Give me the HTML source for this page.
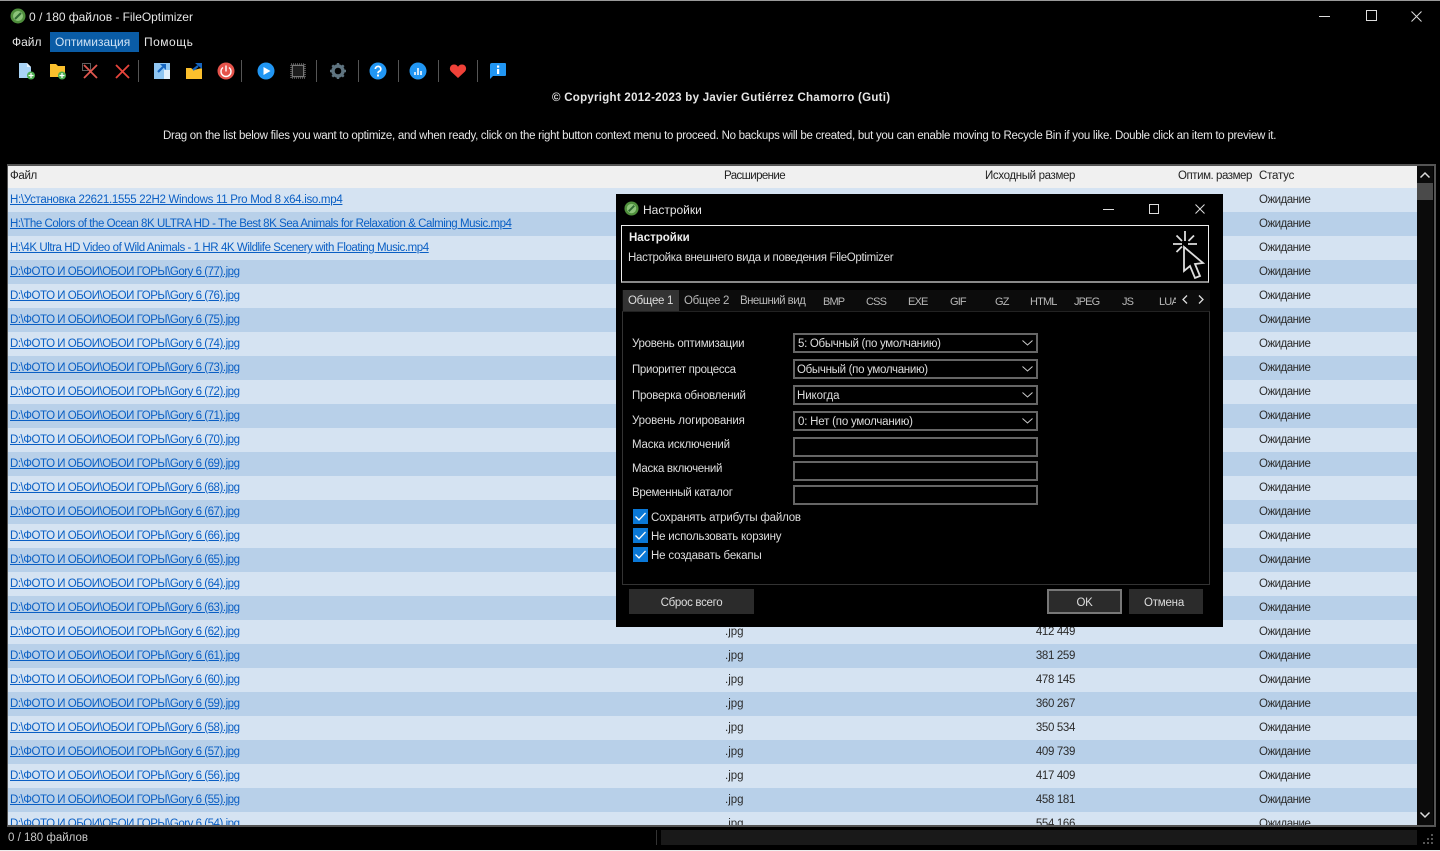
<!DOCTYPE html>
<html lang="ru"><head><meta charset="utf-8"><title>FileOptimizer</title>
<style>
*{box-sizing:border-box}
html,body{margin:0;padding:0;width:1440px;height:851px;overflow:hidden;background:#000}
body{position:relative;font:12px/16px "Liberation Sans","Noto Sans CJK SC",sans-serif;color:#e6e6e6}
.a{position:absolute;white-space:nowrap}
.m{position:absolute;white-space:nowrap;line-height:16px}
svg{position:absolute;overflow:visible}
.sep{position:absolute;top:60px;width:1px;height:22px;background:#555}
#list{position:absolute;left:8px;top:166px;width:1409px;height:659px;overflow:hidden;background:#d5e3f2}
.hd{position:absolute;left:0;top:0;width:1409px;height:22px;background:#f0f0f0;color:#222}
.hd span{position:absolute;top:2px;line-height:16px;font-size:11.5px;letter-spacing:-.35px}
.r{position:relative;height:24px;line-height:24px;color:#2b2b2b;font-size:11.5px}
.r:nth-child(even){background:#b8d0e9}
.r a{position:absolute;left:2px;top:0;color:#0a5fc4;text-decoration:underline;letter-spacing:-.47px}
.r i{position:absolute;font-style:normal}
.r .s{left:1251px;letter-spacing:-.5px}.r .e{left:717px}.r .z{right:342px;letter-spacing:-.35px}
#rows{position:absolute;left:0;top:22px;width:1409px}
#dlg{position:absolute;left:616px;top:194px;width:607px;height:433px;background:#000}
.f{position:absolute;left:177px;width:245px;height:20px;border:2px solid #666;background:#000;padding:1px 0 0 3px;line-height:16px;font-size:11.5px;letter-spacing:-.3px;color:#ddd}
.f svg{left:227px;top:5px}
.l{position:absolute;left:16px;font-size:11.5px;line-height:16px;color:#ddd;white-space:nowrap;letter-spacing:-.26px}
.c{position:absolute;left:17px;width:15px;height:15px;background:#0a78d7}
.c svg{left:2px;top:3px}
.t{position:absolute;top:99px;font-size:11.5px;line-height:16px;color:#b8b8b8;white-space:nowrap;letter-spacing:-.3px}
.u{top:100px;font-size:11px;letter-spacing:-.85px}
.b{position:absolute;top:395px;height:25px;background:#2b2b2b;color:#ddd;text-align:center;line-height:28px;font-size:11.5px;letter-spacing:-.3px}
</style></head><body>
<div class="a" style="left:0;top:0;width:1440px;height:1px;background:#9a9a9a"></div>
<div class="a" style="left:0;top:850px;width:1440px;height:1px;background:#eee"></div>

<svg style="left:10px;top:8px" width="16" height="16" viewBox="0 0 16 16"><circle cx="8" cy="8" r="7.5" fill="#4f8f3c"/><circle cx="8" cy="8" r="5" fill="#8cc47a"/><path d="M5 11L11 5" stroke="#2f6a32" stroke-width="2"/></svg>
<div class="m" style="left:29px;top:9px;letter-spacing:-.03px">0 / 180 файлов - FileOptimizer</div>
<svg style="left:1319px;top:16px" width="11" height="1"><path d="M0 .5H11" stroke="#ddd"/></svg>
<svg style="left:1366px;top:10px" width="11" height="11"><rect x=".5" y=".5" width="10" height="10" fill="none" stroke="#ddd"/></svg>
<svg style="left:1411px;top:11px" width="11" height="11"><path d="M.5 .5L10.5 10.5M10.5 .5L.5 10.5" stroke="#ddd"/></svg>

<div class="a" style="left:50px;top:32px;width:89px;height:20px;background:#0a5ca6"></div>
<div class="m" style="left:12px;top:34px">Файл</div>
<div class="m" style="left:55px;top:34px;color:#cfe2f5">Оптимизация</div>
<div class="m" style="left:144px;top:34px;letter-spacing:.5px">Помощь</div>

<!-- toolbar -->
<svg style="left:18px;top:62px" width="18" height="18" viewBox="0 0 18 18"><path d="M1 1h8l4 4v11H1z" fill="#a9d3f5"/><path d="M9 1l4 4H9z" fill="#e8f4fd"/><circle cx="13" cy="13.5" r="4" fill="#4caf50"/><path d="M13 11v5M10.5 13.5h5" stroke="#fff" stroke-width="1.2"/></svg>
<svg style="left:49px;top:62px" width="18" height="18" viewBox="0 0 18 18"><path d="M1 2h6l2 2h7v11H1z" fill="#fbc02d"/><circle cx="13" cy="13.5" r="4" fill="#4caf50"/><path d="M13 11v5M10.5 13.5h5" stroke="#fff" stroke-width="1.2"/></svg>
<svg style="left:81px;top:62px" width="18" height="18" viewBox="0 0 18 18"><rect x="1.5" y="1.5" width="8" height="7" fill="none" stroke="#bbb" stroke-dasharray="1 1"/><path d="M3 3L16 16M16 3L3 16" stroke="#e0574f" stroke-width="1.8"/></svg>
<svg style="left:113px;top:62px" width="18" height="18" viewBox="0 0 18 18"><path d="M3 3L16 16M16 3L3 16" stroke="#e8453c" stroke-width="1.8"/></svg>
<div class="sep" style="left:138px"></div>
<svg style="left:153px;top:62px" width="18" height="18" viewBox="0 0 18 18"><path d="M1 1h16v16H1z" fill="#8fc6f2"/><path d="M11 8v9h6V8z" fill="#e3f1fc"/><path d="M5 10L10 5" stroke="#1565c0" stroke-width="2.2"/><path d="M7 2h6v6z" fill="#1565c0"/></svg>
<svg style="left:185px;top:62px" width="18" height="18" viewBox="0 0 18 18"><path d="M1 6h5l3 2 8-2v11H1z" fill="#fbc02d"/><path d="M8 8L13 4" stroke="#1565c0" stroke-width="2.2"/><path d="M10 1h7v6z" fill="#1565c0"/></svg>
<svg style="left:217px;top:62px" width="18" height="18" viewBox="0 0 18 18"><circle cx="9" cy="9" r="8.5" fill="#e5534b"/><path d="M6 5.500a5 5 0 1 0 6 0" fill="none" stroke="#fff" stroke-width="1.4"/><path d="M9 3.500v6" stroke="#fff" stroke-width="1.4"/></svg>
<div class="sep" style="left:241px"></div>
<svg style="left:257px;top:62px" width="18" height="18" viewBox="0 0 18 18"><circle cx="9" cy="9" r="8.5" fill="#2196f3"/><path d="M6.500 5l7 4-7 4z" fill="#fff"/></svg>
<svg style="left:289px;top:62px" width="18" height="18" viewBox="0 0 18 18"><rect x="2" y="2" width="14" height="14" fill="#1c1c1c" stroke="#999" stroke-dasharray="1 1"/><rect x="3.500" y="3.500" width="11" height="11" fill="none" stroke="#777"/></svg>
<div class="sep" style="left:316px"></div>
<svg style="left:329px;top:62px" width="18" height="18" viewBox="0 0 18 18"><circle cx="9" cy="9" r="5" fill="none" stroke="#5f7480" stroke-width="3.4"/><path d="M9 1v3M9 14v3M1 9h3M14 9h3M3.300 3.300l2.200 2.200M12.500 12.500l2.200 2.200M14.700 3.300l-2.200 2.200M5.500 12.500l-2.200 2.200" stroke="#5f7480" stroke-width="2.4"/></svg>
<div class="sep" style="left:358px"></div>
<svg style="left:369px;top:62px" width="18" height="18" viewBox="0 0 18 18"><circle cx="9" cy="9" r="8.5" fill="#2196f3"/><path d="M6.400 7a2.700 2.600 0 1 1 3.900 2.300c-.9.500-1.300 1-1.300 2" fill="none" stroke="#fff" stroke-width="1.7"/><rect x="8" y="12.500" width="2" height="2" fill="#fff"/></svg>
<div class="sep" style="left:398px"></div>
<svg style="left:409px;top:62px" width="18" height="18" viewBox="0 0 18 18"><circle cx="9" cy="9" r="8.5" fill="#2196f3"/><path d="M5 10h2v3H5zM8 6h2v7H8zM11 9h2v4h-2z" fill="#cfe6fa"/></svg>
<div class="sep" style="left:438px"></div>
<svg style="left:449px;top:62px" width="18" height="18" viewBox="0 0 18 18"><path d="M9 16L2 9.500C-.5 6.500 1.500 2.500 5 2.500c2 0 3.200 1 4 2.200.8-1.200 2-2.200 4-2.200 3.500 0 5.500 4 3 7z" fill="#ef4138"/></svg>
<div class="sep" style="left:477px"></div>
<svg style="left:489px;top:62px" width="18" height="18" viewBox="0 0 18 18"><path d="M3 1h13a1 1 0 0 1 1 1v11a1 1 0 0 1-1 1H4l-3 3V3a2 2 0 0 1 2-2z" fill="#2196f3"/><rect x="8" y="3.500" width="2.200" height="2.200" fill="#fff"/><rect x="8" y="7" width="2.200" height="5" fill="#fff"/></svg>

<div class="m" style="left:552px;top:90px;font-weight:bold;font-size:11.5px;letter-spacing:.27px">© Copyright 2012-2023 by Javier Gutiérrez Chamorro (Guti)</div>
<div class="m" style="left:163px;top:128px;font-size:11.5px;letter-spacing:-.27px">Drag on the list below files you want to optimize, and when ready, click on the right button context menu to proceed. No backups will be created, but you can enable moving to Recycle Bin if you like. Double click an item to preview it.</div>

<!-- list frame -->
<div class="a" style="left:7px;top:164px;width:1429px;height:663px;border:2px solid #555;border-width:2px 2px 2px 1px"></div>
<div id="list">
<div class="hd"><span style="left:2px">Файл</span><span style="left:716px;letter-spacing:-.6px">Расширение</span><span style="left:977px">Исходный размер</span><span style="left:1170px;letter-spacing:-.45px">Оптим. размер</span><span style="left:1251px;letter-spacing:-.2px">Статус</span></div>
<div id="rows">
<div class="r"><a style="letter-spacing:-.29px">H:\Установка 22621.1555 22H2 Windows 11 Pro Mod 8 x64.iso.mp4</a><i class="s">Ожидание</i></div>
<div class="r"><a style="letter-spacing:-.45px">H:\The Colors of the Ocean 8K ULTRA HD - The Best 8K Sea Animals for Relaxation &amp; Calming Music.mp4</a><i class="s">Ожидание</i></div>
<div class="r"><a style="letter-spacing:-.43px">H:\4K Ultra HD Video of Wild Animals - 1 HR 4K Wildlife Scenery with Floating Music.mp4</a><i class="s">Ожидание</i></div>
<div class="r"><a>D:\ФОТО И ОБОИ\ОБОИ ГОРЫ\Gory 6 (77).jpg</a><i class="s">Ожидание</i></div>
<div class="r"><a>D:\ФОТО И ОБОИ\ОБОИ ГОРЫ\Gory 6 (76).jpg</a><i class="s">Ожидание</i></div>
<div class="r"><a>D:\ФОТО И ОБОИ\ОБОИ ГОРЫ\Gory 6 (75).jpg</a><i class="s">Ожидание</i></div>
<div class="r"><a>D:\ФОТО И ОБОИ\ОБОИ ГОРЫ\Gory 6 (74).jpg</a><i class="s">Ожидание</i></div>
<div class="r"><a>D:\ФОТО И ОБОИ\ОБОИ ГОРЫ\Gory 6 (73).jpg</a><i class="s">Ожидание</i></div>
<div class="r"><a>D:\ФОТО И ОБОИ\ОБОИ ГОРЫ\Gory 6 (72).jpg</a><i class="s">Ожидание</i></div>
<div class="r"><a>D:\ФОТО И ОБОИ\ОБОИ ГОРЫ\Gory 6 (71).jpg</a><i class="s">Ожидание</i></div>
<div class="r"><a>D:\ФОТО И ОБОИ\ОБОИ ГОРЫ\Gory 6 (70).jpg</a><i class="s">Ожидание</i></div>
<div class="r"><a>D:\ФОТО И ОБОИ\ОБОИ ГОРЫ\Gory 6 (69).jpg</a><i class="s">Ожидание</i></div>
<div class="r"><a>D:\ФОТО И ОБОИ\ОБОИ ГОРЫ\Gory 6 (68).jpg</a><i class="s">Ожидание</i></div>
<div class="r"><a>D:\ФОТО И ОБОИ\ОБОИ ГОРЫ\Gory 6 (67).jpg</a><i class="s">Ожидание</i></div>
<div class="r"><a>D:\ФОТО И ОБОИ\ОБОИ ГОРЫ\Gory 6 (66).jpg</a><i class="s">Ожидание</i></div>
<div class="r"><a>D:\ФОТО И ОБОИ\ОБОИ ГОРЫ\Gory 6 (65).jpg</a><i class="s">Ожидание</i></div>
<div class="r"><a>D:\ФОТО И ОБОИ\ОБОИ ГОРЫ\Gory 6 (64).jpg</a><i class="s">Ожидание</i></div>
<div class="r"><a>D:\ФОТО И ОБОИ\ОБОИ ГОРЫ\Gory 6 (63).jpg</a><i class="s">Ожидание</i></div>
<div class="r"><a>D:\ФОТО И ОБОИ\ОБОИ ГОРЫ\Gory 6 (62).jpg</a><i class="e">.jpg</i><i class="z">412 449</i><i class="s">Ожидание</i></div>
<div class="r"><a>D:\ФОТО И ОБОИ\ОБОИ ГОРЫ\Gory 6 (61).jpg</a><i class="e">.jpg</i><i class="z">381 259</i><i class="s">Ожидание</i></div>
<div class="r"><a>D:\ФОТО И ОБОИ\ОБОИ ГОРЫ\Gory 6 (60).jpg</a><i class="e">.jpg</i><i class="z">478 145</i><i class="s">Ожидание</i></div>
<div class="r"><a>D:\ФОТО И ОБОИ\ОБОИ ГОРЫ\Gory 6 (59).jpg</a><i class="e">.jpg</i><i class="z">360 267</i><i class="s">Ожидание</i></div>
<div class="r"><a>D:\ФОТО И ОБОИ\ОБОИ ГОРЫ\Gory 6 (58).jpg</a><i class="e">.jpg</i><i class="z">350 534</i><i class="s">Ожидание</i></div>
<div class="r"><a>D:\ФОТО И ОБОИ\ОБОИ ГОРЫ\Gory 6 (57).jpg</a><i class="e">.jpg</i><i class="z">409 739</i><i class="s">Ожидание</i></div>
<div class="r"><a>D:\ФОТО И ОБОИ\ОБОИ ГОРЫ\Gory 6 (56).jpg</a><i class="e">.jpg</i><i class="z">417 409</i><i class="s">Ожидание</i></div>
<div class="r"><a>D:\ФОТО И ОБОИ\ОБОИ ГОРЫ\Gory 6 (55).jpg</a><i class="e">.jpg</i><i class="z">458 181</i><i class="s">Ожидание</i></div>
<div class="r"><a>D:\ФОТО И ОБОИ\ОБОИ ГОРЫ\Gory 6 (54).jpg</a><i class="e">.jpg</i><i class="z">554 166</i><i class="s">Ожидание</i></div>
</div></div>

<!-- scrollbar -->
<div class="a" style="left:1417px;top:166px;width:16px;height:659px;background:#0b0b0b"></div>
<div class="a" style="left:1417px;top:183px;width:16px;height:17px;background:#4a4a4a"></div>
<svg style="left:1420px;top:172px" width="10" height="6"><path d="M.5 5.500L5 1l4.500 4.500" fill="none" stroke="#ddd" stroke-width="1.5"/></svg>
<svg style="left:1420px;top:812px" width="10" height="6"><path d="M.5 .5L5 5l4.500-4.500" fill="none" stroke="#ddd" stroke-width="1.5"/></svg>

<!-- status -->
<div class="m" style="left:8px;top:830px;color:#c8c8c8;font-size:11.5px">0 / 180 файлов</div>
<div class="a" style="left:656px;top:830px;width:1px;height:15px;background:#333"></div>
<div class="a" style="left:661px;top:830px;width:756px;height:15px;background:#191919"></div>
<svg style="left:1422px;top:834px" width="12" height="12"><path d="M9 0h2v2H9zM5 4h2v2H5zM9 4h2v2H9zM1 8h2v2H1zM5 8h2v2H5zM9 8h2v2H9z" fill="#555"/></svg>

<!-- dialog -->
<div id="dlg">
<svg style="left:8px;top:7px" width="15" height="15" viewBox="0 0 16 16"><circle cx="8" cy="8" r="7.5" fill="#4f8f3c"/><circle cx="8" cy="8" r="5" fill="#8cc47a"/><path d="M5 11L11 5" stroke="#2f6a32" stroke-width="2"/></svg>
<div class="m" style="left:27px;top:8px">Настройки</div>
<svg style="left:487px;top:15px" width="11" height="1"><path d="M0 .5H11" stroke="#ddd"/></svg>
<svg style="left:533px;top:10px" width="10" height="10"><rect x=".5" y=".5" width="9" height="9" fill="none" stroke="#ddd"/></svg>
<svg style="left:579px;top:10px" width="10" height="10"><path d="M.5 .5L9.500 9.500M9.500 .5L.5 9.500" stroke="#ddd"/></svg>

<div class="a" style="left:5px;top:31px;width:588px;height:58px;border:1px solid #eee;border-bottom:2px solid #888"></div>
<div class="m" style="left:13px;top:36px;font-weight:bold;font-size:11.5px;color:#eee">Настройки</div>
<div class="m" style="left:12px;top:56px;font-size:11.5px;letter-spacing:-.31px;color:#ddd">Настройка внешнего вида и поведения FileOptimizer</div>
<svg style="left:555px;top:36px" width="36" height="50" viewBox="0 0 36 50"><path d="M14 1v10M14 17v3M2 14h9M17 14h9M5.500 5.500l5.500 5.500M23 5.500l-5.500 5.500M5.500 22l5.500-5.500" stroke="#ddd" stroke-width="1.8" fill="none"/><path d="M13 17L32 33l-8 1 5 12-5 2-5-12-6 5z" fill="#000" stroke="#ddd" stroke-width="1.8"/></svg>

<div class="a" style="left:6px;top:96px;width:588px;height:21px;background:#0c0c0c"></div>
<div class="a" style="left:7px;top:96px;width:56px;height:21px;background:#333"></div>
<div class="a" style="left:6px;top:117px;width:588px;height:274px;border:1px solid #333;border-top-color:#222"></div>
<div class="t" style="left:12px;color:#ddd">Общее 1</div><div class="t" style="left:68px">Общее 2</div><div class="t" style="left:124px;letter-spacing:-.55px">Внешний вид</div><div class="t u" style="left:207px">BMP</div><div class="t u" style="left:250px">CSS</div><div class="t u" style="left:292px">EXE</div><div class="t u" style="left:334px">GIF</div><div class="t u" style="left:379px">GZ</div><div class="t u" style="left:414px">HTML</div><div class="t u" style="left:458px">JPEG</div><div class="t u" style="left:506px">JS</div><div class="t u" style="left:543px;width:17px;overflow:hidden">LUA</div>
<svg style="left:566px;top:101px" width="6" height="9"><path d="M5 .5L1 4.500l4 4" fill="none" stroke="#ddd" stroke-width="1.3"/></svg>
<svg style="left:582px;top:101px" width="6" height="9"><path d="M1 .5l4 4-4 4" fill="none" stroke="#ddd" stroke-width="1.3"/></svg>

<div class="l" style="top:142px">Уровень оптимизации</div>
<div class="l" style="top:168px;letter-spacing:-.33px">Приоритет процесса</div>
<div class="l" style="top:194px">Проверка обновлений</div>
<div class="l" style="top:219px;letter-spacing:-.15px">Уровень логирования</div>
<div class="l" style="top:243px;letter-spacing:-.18px">Маска исключений</div>
<div class="l" style="top:267px;letter-spacing:-.3px">Маска включений</div>
<div class="l" style="top:291px;letter-spacing:-.3px">Временный каталог</div>

<div class="f" style="top:139px">5: Обычный (по умолчанию)<svg width="11" height="6"><path d="M.5 .5L5.500 5l5-4.500" fill="none" stroke="#ccc"/></svg></div>
<div class="f" style="top:165px;padding-left:2px">Обычный (по умолчанию)<svg width="11" height="6"><path d="M.5 .5L5.500 5l5-4.500" fill="none" stroke="#ccc"/></svg></div>
<div class="f" style="top:191px;padding-left:2px;letter-spacing:-.1px">Никогда<svg width="11" height="6"><path d="M.5 .5L5.500 5l5-4.500" fill="none" stroke="#ccc"/></svg></div>
<div class="f" style="top:217px;letter-spacing:-.2px">0: Нет (по умолчанию)<svg width="11" height="6"><path d="M.5 .5L5.500 5l5-4.500" fill="none" stroke="#ccc"/></svg></div>
<div class="f" style="top:243px"></div>
<div class="f" style="top:267px"></div>
<div class="f" style="top:291px"></div>

<div class="c" style="top:315px"><svg width="11" height="9"><path d="M.5 4.500L4 8l6.500-7" fill="none" stroke="#fff" stroke-width="1.3"/></svg></div>
<div class="c" style="top:334px"><svg width="11" height="9"><path d="M.5 4.500L4 8l6.500-7" fill="none" stroke="#fff" stroke-width="1.3"/></svg></div>
<div class="c" style="top:353px"><svg width="11" height="9"><path d="M.5 4.500L4 8l6.500-7" fill="none" stroke="#fff" stroke-width="1.3"/></svg></div>
<div class="l" style="left:35px;top:316px;letter-spacing:-.2px">Сохранять атрибуты файлов</div>
<div class="l" style="left:35px;top:335px;letter-spacing:-.2px">Не использовать корзину</div>
<div class="l" style="left:35px;top:354px;letter-spacing:-.17px">Не создавать бекапы</div>

<div class="b" style="left:13px;width:125px">Сброс всего</div>
<div class="b" style="left:431px;width:75px;border:2px solid #777;line-height:24px">OK</div>
<div class="b" style="left:513px;width:74px;letter-spacing:-.2px;padding-right:4px">Отмена</div>
</div>
</body></html>
